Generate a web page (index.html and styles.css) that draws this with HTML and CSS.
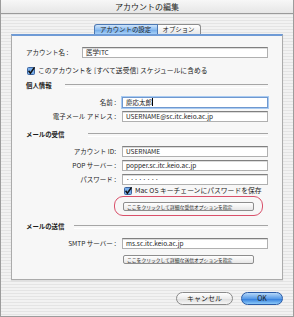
FILE: index.html
```html
<!DOCTYPE html>
<html lang="ja">
  <head>
    <meta charset="UTF-8" />
    <title>アカウントの編集</title>
    <link rel="stylesheet" href="styles.css">
  </head>
  <body>
    <div class="window">
      <div class="titlebar">アカウントの編集</div>

      <div class="tabs">
        <div class="tab selected">アカウントの設定</div>
        <div class="tab">オプション</div>
      </div>

      <div class="panel">
        <div class="account-row">
          <div class="account-label">アカウント名 :</div>
          <div class="field">医学ITC</div>
        </div>

        <div class="check-row first-check">
          <svg class="check" width="8" height="8" viewBox="0 0 8 8">
            <rect x="0.5" y="0.5" width="7" height="7" rx="1" fill="#78ade9" stroke="#3d649e" />
            <path d="M1.6 3.8 L3.4 6.3 L7.6 0.2" stroke="#111" stroke-width="1.5" fill="none" />
          </svg>
          <span>このアカウントを [すべて送受信] スケジュールに含める</span>
        </div>

        <!-- personal info -->
        <div class="section-head personal"><span>個人情報</span></div>
        <div class="form-grid personal-grid">
          <div class="label">名前 :</div>
          <div class="field focus">慶応太郎<span class="caret"></span></div>
          <div class="label">電子メール アドレス :</div>
          <div class="field">USERNAME@sc.itc.keio.ac.jp</div>
        </div>

        <!-- incoming -->
        <div class="section-head incoming"><span>メールの受信</span></div>
        <div class="form-grid incoming-grid">
          <div class="label">アカウント ID:</div>
          <div class="field">USERNAME</div>
          <div class="label">POP サーバー :</div>
          <div class="field">popper.sc.itc.keio.ac.jp</div>
          <div class="label">パスワード :</div>
          <div class="field dots">········</div>
        </div>
        <div class="check-row keychain">
          <svg class="check" width="8" height="8" viewBox="0 0 8 8">
            <rect x="0.5" y="0.5" width="7" height="7" rx="1" fill="#78ade9" stroke="#3d649e" />
            <path d="M1.6 3.8 L3.4 6.3 L7.6 0.2" stroke="#111" stroke-width="1.5" fill="none" />
          </svg>
          <span>Mac OS キーチェーンにパスワードを保存</span>
        </div>
        <div class="detail-btn marked">ここをクリックして詳細な受信オプションを指定</div>

        <!-- outgoing -->
        <div class="section-head outgoing"><span>メールの送信</span></div>
        <div class="form-grid outgoing-grid">
          <div class="label">SMTP サーバー :</div>
          <div class="field">ms.sc.itc.keio.ac.jp</div>
        </div>
        <div class="detail-btn last-btn">ここをクリックして詳細な送信オプションを指定</div>
      </div>

      <div class="actions">
        <div class="pill cancel">キャンセル</div>
        <div class="pill ok">OK</div>
      </div>
    </div>
  </body>
</html>
```

FILE: styles.css
```css
* {
  box-sizing: border-box;
}
body {
  margin: 0;
  font-family: "Noto Sans CJK JP", "Noto Sans", sans-serif;
  color: #1c1c1c;
}
.window {
  width: 294px;
  height: 317px;
  border: 1px solid #9c9c9c;
  border-top: none;
  background: repeating-linear-gradient(
    to bottom,
    #f2f2f2 0,
    #f2f2f2 2px,
    #e4e4e4 2px,
    #e4e4e4 3px
  );
}
.titlebar {
  height: 14px;
  border-bottom: 1px solid #9a9a9a;
  background: linear-gradient(#f7f7f7, #e6e6e6);
  text-align: center;
  font-size: 8px;
  line-height: 13px;
  color: #222;
}
.tabs {
  display: flex;
  justify-content: center;
  margin-top: 10px;
}
.tab {
  height: 10px;
  width: 43px;
  font-size: 6.4px;
  line-height: 9px;
  text-align: center;
  border: 1px solid #8c8c8c;
  border-bottom: none;
  border-left: none;
  border-radius: 0 3px 0 0;
  background: linear-gradient(#ffffff, #e8e8e8);
}
.tab.selected {
  width: 64px;
  border: 1px solid #4d78b2;
  border-bottom: none;
  border-radius: 3px 0 0 0;
  background: linear-gradient(#cfe5fb, #8dbdf0 50%, #6ea8e8 51%, #a9d1f7);
}
.panel {
  margin: 0 10px;
  border: 1px solid #ababab;
  border-top: 2px solid #6f9bd6;
  background: #f7f7f7;
  padding: 11px 14px 15px;
  box-shadow: 0 1px 1px rgba(0, 0, 0, 0.08);
}
.account-row {
  display: flex;
}
.account-label {
  width: 56px;
  font-size: 6.5px;
  line-height: 11px;
  white-space: nowrap;
}
.account-row .field {
  flex: 1;
}
.field {
  height: 11px;
  background: #fff;
  border: 1px solid #b0b0b0;
  border-top-color: #808080;
  box-shadow: inset 0 1px 0 #dcdcdc;
  font-size: 6.5px;
  line-height: 9px;
  padding: 0 3px;
  white-space: nowrap;
  overflow: hidden;
}
.field.focus {
  border-color: #6f98cf;
  box-shadow: 0 0 0 1px #a9cbf2;
}
.field.dots {
  letter-spacing: 0.5px;
}
.caret {
  display: inline-block;
  width: 1px;
  height: 8px;
  background: #000;
  vertical-align: -1px;
}
.check-row {
  display: flex;
  align-items: center;
  gap: 3px;
  height: 9px;
  font-size: 6.8px;
  line-height: 9px;
  white-space: nowrap;
}
.first-check {
  margin: 8px 0 0 1px;
}
.keychain {
  margin: 1px 0 0 98px;
}
.section-head {
  display: flex;
  align-items: center;
  gap: 13px;
  height: 9px;
  font-size: 6.4px;
  font-weight: bold;
  line-height: 9px;
}
.section-head::after {
  content: "";
  flex: 1;
  height: 2px;
  border-top: 1px solid #a6a6a6;
  border-bottom: 1px solid #ffffff;
}
.personal {
  margin-top: 6px;
}
.incoming {
  margin-top: 8px;
  gap: 24px;
}
.outgoing {
  margin-top: 11px;
  gap: 10px;
}
.form-grid {
  display: grid;
  grid-template-columns: 90px 1fr;
  column-gap: 6px;
  row-gap: 3px;
}
.personal-grid {
  margin-top: 7px;
}
.incoming-grid {
  margin-top: 7px;
}
.outgoing-grid {
  margin-top: 7px;
}
.label {
  text-align: right;
  font-size: 6.5px;
  line-height: 11px;
  white-space: nowrap;
}
.detail-btn {
  width: 131px;
  height: 9px;
  margin-left: 97px;
  border: 1px solid #8d8d8d;
  border-radius: 2px;
  background: linear-gradient(#ffffff, #e6e6e6);
  font-size: 4.8px;
  line-height: 7px;
  padding-left: 3px;
  white-space: nowrap;
}
.detail-btn.marked {
  position: relative;
  margin-top: 7px;
}
.detail-btn.marked::after {
  content: "";
  position: absolute;
  top: -7px;
  bottom: -6px;
  left: -10px;
  right: -10px;
  border: 1px solid #d9506a;
  border-radius: 9px;
}
.last-btn {
  margin-top: 6px;
}
.actions {
  display: flex;
  justify-content: flex-end;
  gap: 8px;
  margin-top: 12px;
  padding-right: 10px;
}
.pill {
  height: 13px;
  border-radius: 7px;
  font-size: 7px;
  line-height: 11px;
  text-align: center;
}
.cancel {
  width: 57px;
  border: 1px solid #8a8a8a;
  background: linear-gradient(#ffffff, #ececec 50%, #dcdcdc 51%, #f6f6f6);
}
.ok {
  width: 42px;
  border: 1px solid #2b5ba6;
  background: linear-gradient(#b6d8f9, #5a9ce8 50%, #2c77da 51%, #8ccaf9);
}
```
